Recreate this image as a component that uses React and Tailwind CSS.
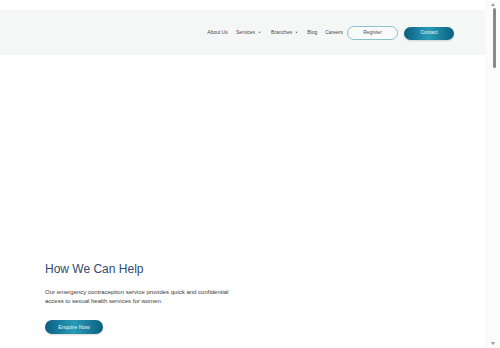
export default function App() {
  const font = { fontFamily: '"Liberation Sans", Arial, sans-serif' };
  const Caret = () => (
    <svg width="3" height="3" viewBox="0 0 4 4" className="ml-[3px] mb-[1px]">
      <path d="M0.5 1 L3.5 1 L2 3 Z" fill="#666" />
    </svg>
  );
  return (
    <div className="h-[348px] flex bg-white overflow-hidden" style={font}>
      <main className="flex-1">
        <div className="h-[10px]" />
        <header className="h-[45px] bg-[#f5f7f7] flex items-center justify-end pr-[31px] pt-[1px]">
          <nav className="flex items-center text-[5px] text-[#4a4a4a]">
            <a className="mr-[8px]">About Us</a>
            <a className="flex items-center mr-[10px]">Services<Caret /></a>
            <a className="flex items-center mr-[9px]">Branches<Caret /></a>
            <a className="mr-[8px]">Blog</a>
            <a className="mr-[4px]">Careers</a>
            <button className="w-[51px] h-[14px] rounded-full border border-[#8cc2ce] bg-white/40 text-[5px] text-[#555] flex items-center justify-center mr-[6px]">
              Register
            </button>
            <button className="w-[50px] h-[13px] rounded-full bg-[linear-gradient(90deg,#0b5f80,#2a9ab6_50%,#0b5f80)] text-[5px] text-white/90 flex items-center justify-center shadow-[0_1px_2px_rgba(0,0,0,0.15)]">
              Contact
            </button>
          </nav>
        </header>
        <section className="pl-[45px] pt-[207px]">
          <h1 className="text-[12px] leading-[14px] text-[#2f4a6e]">How We Can Help</h1>
          <p className="mt-[12px] text-[6px] leading-[9px] text-[#3a3a3a] w-[186px]">
            Our emergency contraception service provides quick and confidential access to sexual health services for women.
          </p>
          <button className="mt-[14px] w-[58px] h-[14px] rounded-full bg-[linear-gradient(90deg,#0b5f80,#2a9ab6_50%,#0b5f80)] text-[5.5px] text-white/90 flex items-center justify-center shadow-[0_1px_2px_rgba(0,0,0,0.15)]">
            Enquire Now
          </button>
        </section>
      </main>
      <div className="w-[15px] h-full bg-[#fbfbfb] flex flex-col items-center">
        <svg width="6" height="5" viewBox="0 0 6 5" className="mt-[2px]">
          <path d="M1 4 L3 1 L5 4 Z" fill="#9a9a9a" />
        </svg>
        <div className="mt-[1px] ml-[3px] w-[3px] h-[60px] rounded-full bg-[#8a8a8a]" />
        <div className="flex-1" />
        <svg width="6" height="5" viewBox="0 0 6 5" className="mb-[2px]">
          <path d="M1 1 L3 4 L5 1 Z" fill="#9a9a9a" />
        </svg>
      </div>
    </div>
  );
}
